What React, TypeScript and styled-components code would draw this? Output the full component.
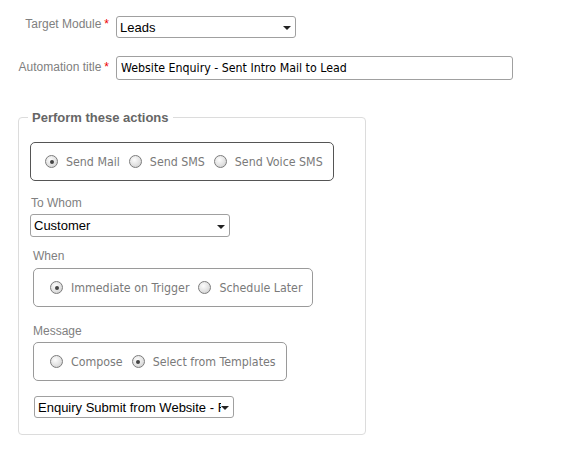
import React from "react";
import styled, { createGlobalStyle } from "styled-components";

const Global = createGlobalStyle`
  html, body { margin: 0; padding: 0; background: #fff; }
  body { font-family: "Liberation Sans", Arial, sans-serif; }
`;

const Page = styled.div`
  width: 563px;
  height: 449px;
  padding-top: 16px;
  box-sizing: border-box;
`;

const FormRow = styled.div<{ $mt?: number }>`
  display: grid;
  grid-template-columns: 109px auto;
  column-gap: 7px;
  align-items: start;
  margin-top: ${(p) => p.$mt ?? 0}px;
`;

const RowLabel = styled.label<{ $pt?: number }>`
  text-align: right;
  font-family: "Liberation Sans", Arial, sans-serif;
  font-size: 12px;
  line-height: 14px;
  color: #808080;
  padding-top: ${(p) => p.$pt ?? 0}px;
  white-space: nowrap;
`;

const Req = styled.span`
  color: #e00;
  margin-left: 3px;
`;

const SelectWrap = styled.div<{ $w: number; $h: number; $ml?: number; $mt?: number }>`
  position: relative;
  width: ${(p) => p.$w}px;
  height: ${(p) => p.$h}px;
  margin-left: ${(p) => p.$ml ?? 0}px;
  margin-top: ${(p) => p.$mt ?? 0}px;
`;

const Select = styled.select`
  appearance: none;
  -webkit-appearance: none;
  width: 100%;
  height: 100%;
  box-sizing: border-box;
  border: 1px solid #a0a0a0;
  border-radius: 3px;
  background: #fff;
  font-family: "Liberation Sans", Arial, sans-serif;
  font-size: 13px;
  color: #000;
  padding: 0 12px 0 3px;
  margin: 0;
  outline: none;
`;

const Caret = styled.span`
  position: absolute;
  right: 5px;
  top: 50%;
  margin-top: -1px;
  width: 0;
  height: 0;
  border-left: 4px solid transparent;
  border-right: 4px solid transparent;
  border-top: 4px solid #222;
  pointer-events: none;
`;

const TextInput = styled.input`
  width: 397px;
  height: 24px;
  box-sizing: border-box;
  border: 1px solid #a0a0a0;
  border-radius: 3px;
  padding: 0 4px;
  margin: 0;
  font-family: "DejaVu Sans", Tahoma, sans-serif;
  font-stretch: semi-condensed;
  font-size: 12.3px;
  color: #000;
  outline: none;
`;

const Fieldset = styled.fieldset`
  width: 348px;
  box-sizing: border-box;
  margin: 30px 0 0 18px;
  padding: 9px 11px 16px 11px;
  border: 1px solid #dcdcdc;
  border-radius: 4px;
`;

const Legend = styled.legend`
  font-family: "Liberation Sans", Arial, sans-serif;
  font-weight: bold;
  font-size: 13px;
  line-height: 15px;
  color: #666;
  padding: 0 4px;
  margin-left: -2px;
`;

const SubLabel = styled.div<{ $ml?: number; $mt?: number }>`
  font-family: "Liberation Sans", Arial, sans-serif;
  font-size: 12px;
  line-height: 14px;
  color: #808080;
  margin-left: ${(p) => p.$ml ?? 0}px;
  margin-top: ${(p) => p.$mt ?? 0}px;
  margin-bottom: 4px;
`;

const RadioBox = styled.div<{ $dark?: boolean; $ml?: number; $mt?: number; $pl: number }>`
  display: flex;
  width: fit-content;
  align-items: center;
  gap: 9px;
  height: 39px;
  box-sizing: border-box;
  padding: 0 10px 0 ${(p) => p.$pl}px;
  border: 1px solid ${(p) => (p.$dark ? "#555" : "#9a9a9a")};
  border-radius: 5px;
  margin-left: ${(p) => p.$ml ?? 0}px;
  margin-top: ${(p) => p.$mt ?? 0}px;
`;

const RadioOpt = styled.label`
  display: flex;
  align-items: center;
  gap: 8px;
  font-family: "DejaVu Sans", Tahoma, sans-serif;
  font-stretch: semi-condensed;
  font-size: 12.3px;
  color: #7a7a7a;
  white-space: nowrap;
`;

const Dot = styled.span<{ $on?: boolean }>`
  position: relative;
  width: 13px;
  height: 13px;
  box-sizing: border-box;
  border-radius: 50%;
  border: 1px solid #7c7c7c;
  background: radial-gradient(circle at 40% 35%, #fdfdfd 0%, #e2e2e2 55%, #c8c8c8 100%);
  flex: none;
  &::after {
    content: "";
    display: ${(p) => (p.$on ? "block" : "none")};
    position: absolute;
    left: 3.5px;
    top: 3.5px;
    width: 4px;
    height: 4px;
    border-radius: 50%;
    background: #444;
  }
`;

function Radio({ label, on }: { label: string; on?: boolean }) {
  return (
    <RadioOpt>
      <Dot $on={on} />
      {label}
    </RadioOpt>
  );
}

function Dropdown({ w, h, ml, mt, value }: { w: number; h: number; ml?: number; mt?: number; value: string }) {
  return (
    <SelectWrap $w={w} $h={h} $ml={ml} $mt={mt}>
      <Select defaultValue={value}>
        <option>{value}</option>
      </Select>
      <Caret />
    </SelectWrap>
  );
}

export default function App() {
  return (
    <Page>
      <Global />
      <FormRow>
        <RowLabel $pt={1}>
          Target Module<Req>*</Req>
        </RowLabel>
        <Dropdown w={180} h={22} value="Leads" />
      </FormRow>
      <FormRow $mt={18}>
        <RowLabel $pt={4}>
          Automation title<Req>*</Req>
        </RowLabel>
        <TextInput defaultValue="Website Enquiry - Sent Intro Mail to Lead" />
      </FormRow>
      <Fieldset>
        <Legend>Perform these actions</Legend>
        <RadioBox $dark $pl={14} $mt={8}>
          <Radio label="Send Mail" on />
          <Radio label="Send SMS" />
          <Radio label="Send Voice SMS" />
        </RadioBox>
        <SubLabel $ml={1} $mt={15}>To Whom</SubLabel>
        <Dropdown w={200} h={23} value="Customer" />
        <SubLabel $ml={3} $mt={12}>When</SubLabel>
        <RadioBox $pl={16} $ml={3} $mt={5}>
          <Radio label="Immediate on Trigger" on />
          <Radio label="Schedule Later" />
        </RadioBox>
        <SubLabel $ml={3} $mt={17}>Message</SubLabel>
        <RadioBox $pl={16} $ml={3} $mt={4}>
          <Radio label="Compose" />
          <Radio label="Select from Templates" on />
        </RadioBox>
        <Dropdown w={200} h={22} ml={4} mt={15} value="Enquiry Submit from Website - Follow up" />
      </Fieldset>
    </Page>
  );
}
